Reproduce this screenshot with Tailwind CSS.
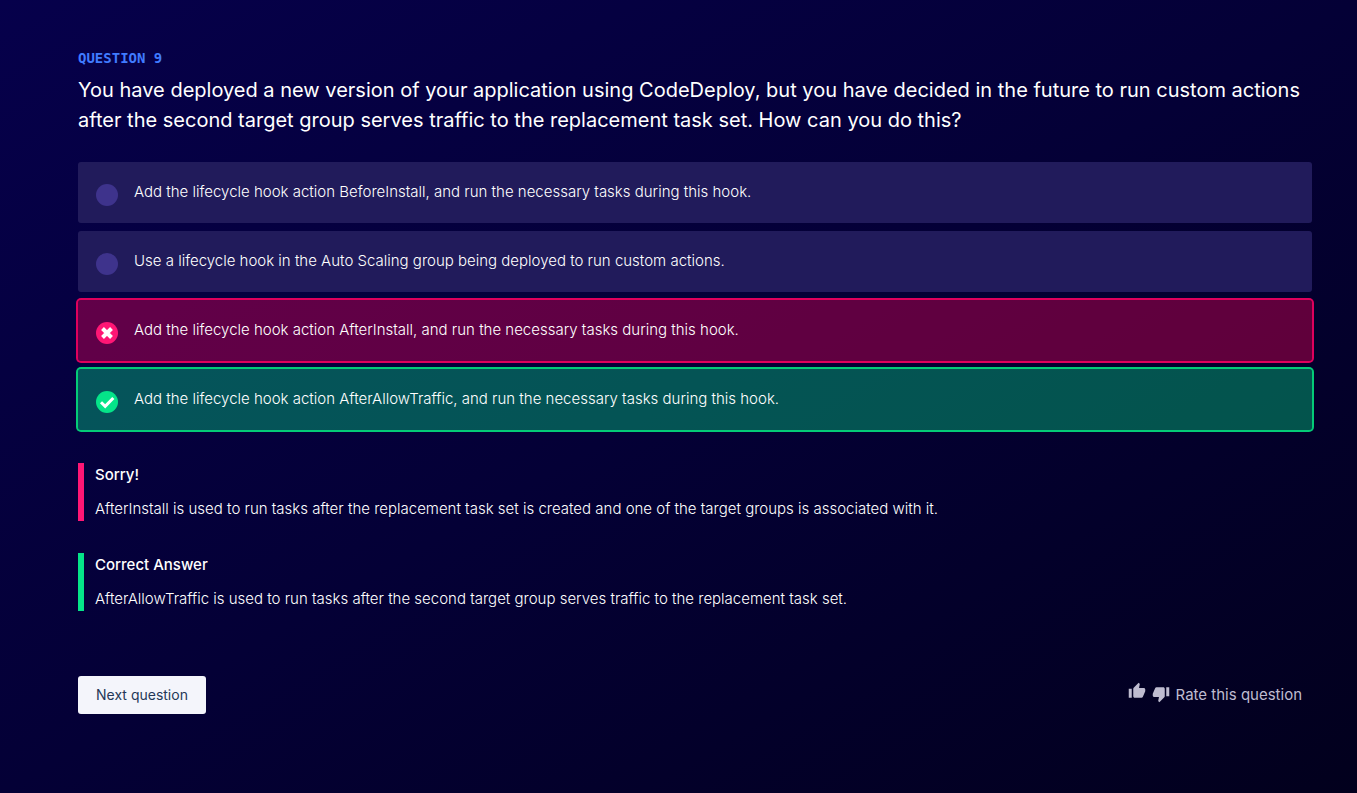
<!DOCTYPE html>
<html lang="en">
<head>
<meta charset="utf-8">
<meta name="viewport" content="width=device-width, initial-scale=1">
<title>Question 9</title>
<script src="https://cdn.jsdelivr.net/npm/@tailwindcss/browser@4"></script>
</head>
<body class="min-h-screen bg-linear-to-br from-[#06004b] via-[#040036] to-[#02001d] pt-12 pr-[45px] pb-12 pl-[78px] font-['Inter',sans-serif] text-white">
<main>
  <form>
    <p class="font-['DejaVu_Sans_Mono',monospace] text-sm font-bold leading-5 text-[#407bff]">QUESTION 9</p>
    <h1 class="mt-[7px] text-[20px] leading-[30px]">You have deployed a new version of your application using CodeDeploy, but you have decided in the future to run custom actions after the second target group serves traffic to the replacement task set. How can you do this?</h1>

    <fieldset class="mt-[27px] flex flex-col gap-2" aria-label="Answers">
      <label class="flex items-start gap-4 rounded-[3px] bg-[#211b5b] px-[18px] pt-[18px] pb-[17px] text-[15px] font-light leading-6">
        <span class="grid shrink-0 pt-1"><input type="radio" name="answer" class="size-[22px] appearance-none rounded-full bg-[#3e338c]"></span>
        <span>Add the lifecycle hook action BeforeInstall, and run the necessary tasks during this hook.</span>
      </label>
      <label class="flex items-start gap-4 rounded-[3px] bg-[#211b5b] px-[18px] pt-[18px] pb-[17px] text-[15px] font-light leading-6">
        <span class="grid shrink-0 pt-1"><input type="radio" name="answer" class="size-[22px] appearance-none rounded-full bg-[#3e338c]"></span>
        <span>Use a lifecycle hook in the Auto Scaling group being deployed to run custom actions.</span>
      </label>
      <label class="flex items-start gap-4 rounded-[3px] bg-[#f80055]/38 px-[18px] pt-[18px] pb-[17px] text-[15px] font-light leading-6 ring-2 ring-[#df005c]">
        <span class="grid shrink-0 pt-1"><input type="radio" name="answer" checked class="col-start-1 row-start-1 size-[22px] appearance-none rounded-full bg-[#ff1675]">
          <svg class="pointer-events-none col-start-1 row-start-1 size-[22px]" viewBox="0 0 22 22" fill="none" stroke="#fff" stroke-width="4" aria-hidden="true"><path d="M6.500 6.500l9 9M15.500 6.500l-9 9"/></svg></span>
        <span>Add the lifecycle hook action AfterInstall, and run the necessary tasks during this hook.</span>
      </label>
      <label class="flex items-start gap-4 rounded-[3px] bg-[#05e489]/37 px-[18px] pt-[18px] pb-[17px] text-[15px] font-light leading-6 ring-2 ring-[#04cb77]">
        <span class="grid shrink-0 pt-1"><input type="radio" name="answer" class="col-start-1 row-start-1 size-[22px] appearance-none rounded-full bg-[#05e489]">
          <svg class="pointer-events-none col-start-1 row-start-1 size-[22px]" viewBox="0 0 22 22" fill="none" stroke="#fff" stroke-width="3" aria-hidden="true"><path d="M5 11.200l4.200 4.200L17.300 7"/></svg></span>
        <span>Add the lifecycle hook action AfterAllowTraffic, and run the necessary tasks during this hook.</span>
      </label>
    </fieldset>

    <section class="mt-[33px] border-l-6 border-[#ff1675] pl-[11px]">
      <h2 class="text-[15px] font-medium leading-6">Sorry!</h2>
      <p class="mt-2.5 text-[15px] font-light leading-6">AfterInstall is used to run tasks after the replacement task set is created and one of the target groups is associated with it.</p>
    </section>
    <section class="mt-8 border-l-6 border-[#05e489] pl-[11px]">
      <h2 class="text-[15px] font-medium leading-6">Correct Answer</h2>
      <p class="mt-2.5 text-[15px] font-light leading-6">AfterAllowTraffic is used to run tasks after the second target group serves traffic to the replacement task set.</p>
    </section>

    <div class="mt-[65px] flex items-center justify-between pr-2.5">
      <button type="button" class="h-[38px] w-32 rounded-[3px] bg-[#f4f5fb] text-sm text-[#253858]">Next question</button>
      <div class="flex items-center gap-1.5 text-[15px] leading-6 text-[#bfbcd0]">
        <button type="button" aria-label="Like" class="pb-2"><svg class="size-[18px]" viewBox="0 0 24 24" fill="currentColor"><path d="M1 21h4V9H1v12zm22-11c0-1.100-.9-2-2-2h-6.310l.95-4.570.03-.32c0-.41-.17-.79-.44-1.060L14.170 1 7.590 7.590C7.220 7.950 7 8.450 7 9v10c0 1.100.9 2 2 2h9c.83 0 1.540-.5 1.840-1.220l3.020-7.050c.09-.23.14-.47.14-.73v-2z"/></svg></button>
        <button type="button" aria-label="Dislike" class="pb-0.5"><svg class="size-[18px]" viewBox="0 0 24 24" fill="currentColor"><path d="M15 3H6c-.83 0-1.540.5-1.840 1.220l-3.020 7.050c-.09.23-.14.47-.14.73v2c0 1.100.9 2 2 2h6.310l-.95 4.570-.03.32c0 .41.17.79.44 1.060L9.830 23l6.590-6.590c.36-.36.58-.86.58-1.410V5c0-1.100-.9-2-2-2zm4 0v12h4V3h-4z"/></svg></button>
        <span>Rate this question</span>
      </div>
    </div>
  </form>
</main>
</body>
</html>
